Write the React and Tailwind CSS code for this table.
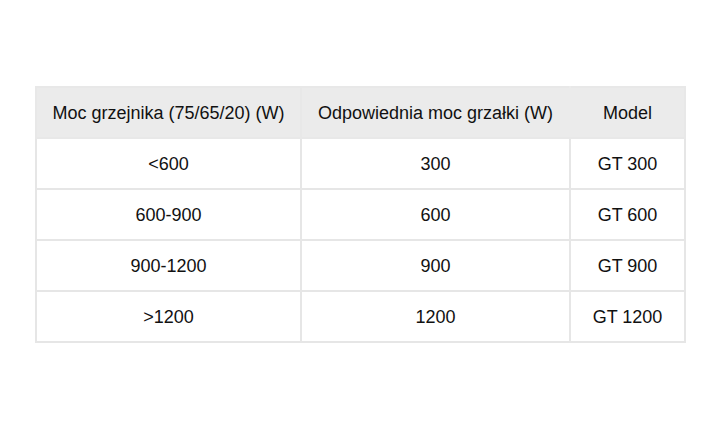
const rows = [
  ["<600", "300", "GT 300"],
  ["600-900", "600", "GT 600"],
  ["900-1200", "900", "GT 900"],
  [">1200", "1200", "GT 1200"],
];

export default function App() {
  return (
    <div className="w-[720px] h-[425px] bg-white pt-[86px] pl-[35px] font-['Liberation_Sans',Arial,sans-serif] text-[18px] leading-[20px] text-[#111]">
      <table className="border-collapse table-fixed w-[649px]">
        <colgroup>
          <col className="w-[265px]" />
          <col className="w-[269px]" />
          <col className="w-[115px]" />
        </colgroup>
        <thead>
          <tr className="bg-[#ebebeb] h-[51px]">
            <th className="font-normal text-center p-0 border-2 border-[#e8e8e8]">Moc grzejnika (75/65/20) (W)</th>
            <th className="font-normal text-center p-0 border-2 border-[#ebebeb] border-y-[#e8e8e8]">Odpowiednia moc grzałki (W)</th>
            <th className="font-normal text-center p-0 border-2 border-[#e8e8e8]">Model</th>
          </tr>
        </thead>
        <tbody>
          {rows.map((r) => (
            <tr key={r[0]} className="h-[51px]">
              {r.map((c, i) => (
                <td key={i} className="text-center p-0 border-2 border-[#e6e6e6]">
                  {c}
                </td>
              ))}
            </tr>
          ))}
        </tbody>
      </table>
    </div>
  );
}
